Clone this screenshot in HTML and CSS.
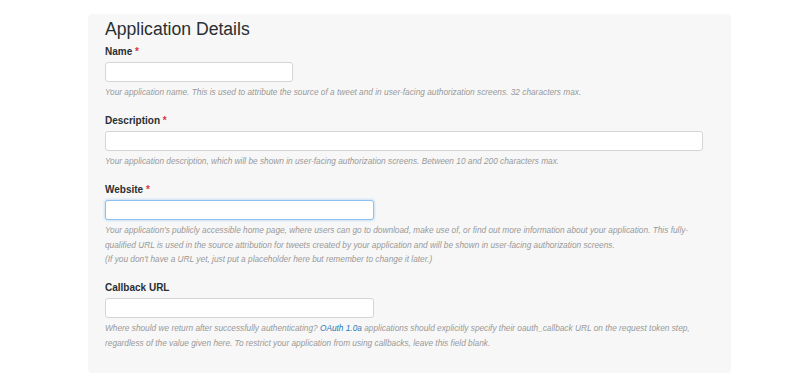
FILE: index.html
```html
<!DOCTYPE html>
<html>
<head>
<meta charset="utf-8">
<link rel="stylesheet" href="styles.css">
</head>
<body>
<div class="panel">
  <h2 class="title">Application Details</h2>
  <div class="group">
    <label class="label">Name <span class="req">*</span></label>
    <input class="input input-short" type="text">
    <p class="help">Your application name. This is used to attribute the source of a tweet and in user-facing authorization screens. 32 characters max.</p>
  </div>
  <div class="group">
    <label class="label">Description <span class="req">*</span></label>
    <input class="input input-full" type="text">
    <p class="help">Your application description, which will be shown in user-facing authorization screens. Between 10 and 200 characters max.</p>
  </div>
  <div class="group">
    <label class="label">Website <span class="req">*</span></label>
    <input class="input input-mid focused" type="text">
    <p class="help">Your application's publicly accessible home page, where users can go to download, make use of, or find out more information about your application. This fully-<br>qualified URL is used in the source attribution for tweets created by your application and will be shown in user-facing authorization screens.<br>(If you don't have a URL yet, just put a placeholder here but remember to change it later.)</p>
  </div>
  <div class="group last">
    <label class="label">Callback URL</label>
    <input class="input input-mid" type="text">
    <p class="help">Where should we return after successfully authenticating? <a class="link" href="#">OAuth 1.0a</a> applications should explicitly specify their oauth_callback URL on the request token step,<br>regardless of the value given here. To restrict your application from using callbacks, leave this field blank.</p>
  </div>
</div>
</body>
</html>
```

FILE: styles.css
```css
html, body {
  margin: 0;
  padding: 0;
  background: #ffffff;
}
body {
  font-family: "Liberation Sans", Arial, Helvetica, sans-serif;
  color: #333333;
}
.panel {
  margin: 14px 0 0 88px;
  width: 643px;
  box-sizing: border-box;
  padding: 5px 28px 25px 17px;
  background: #f7f7f7;
  border-radius: 4px;
  height: 359px;
}
.title {
  margin: 0 0 6px 0;
  font-size: 17.6px;
  line-height: 20px;
  font-weight: normal;
  color: #292f33;
}
.group {
  display: flex;
  flex-direction: column;
  align-items: flex-start;
  margin-bottom: 14.5px;
}
.group.last {
  margin-bottom: 0;
}
.label {
  display: block;
  font-size: 10px;
  line-height: 14px;
  font-weight: bold;
  color: #292f33;
  margin-bottom: 3px;
}
.req {
  color: #e0333a;
}
.input {
  box-sizing: border-box;
  height: 20px;
  margin: 0;
  border: 1px solid #d5d5d5;
  border-radius: 3px;
  background: #ffffff;
  outline: none;
  padding: 0 4px;
}
.input-short { width: 188px; }
.input-full { width: 598px; }
.input-mid { width: 269px; }
.focused {
  border-color: #8cc2f2;
  box-shadow: 0 0 3px rgba(102, 175, 233, 0.6);
}
.help {
  margin: 3px 0 0 0;
  font-size: 8.3px;
  line-height: 14.5px;
  font-style: italic;
  color: #999999;
  white-space: nowrap;
}
.link {
  color: #2b7bb9;
  text-decoration: none;
}
```
